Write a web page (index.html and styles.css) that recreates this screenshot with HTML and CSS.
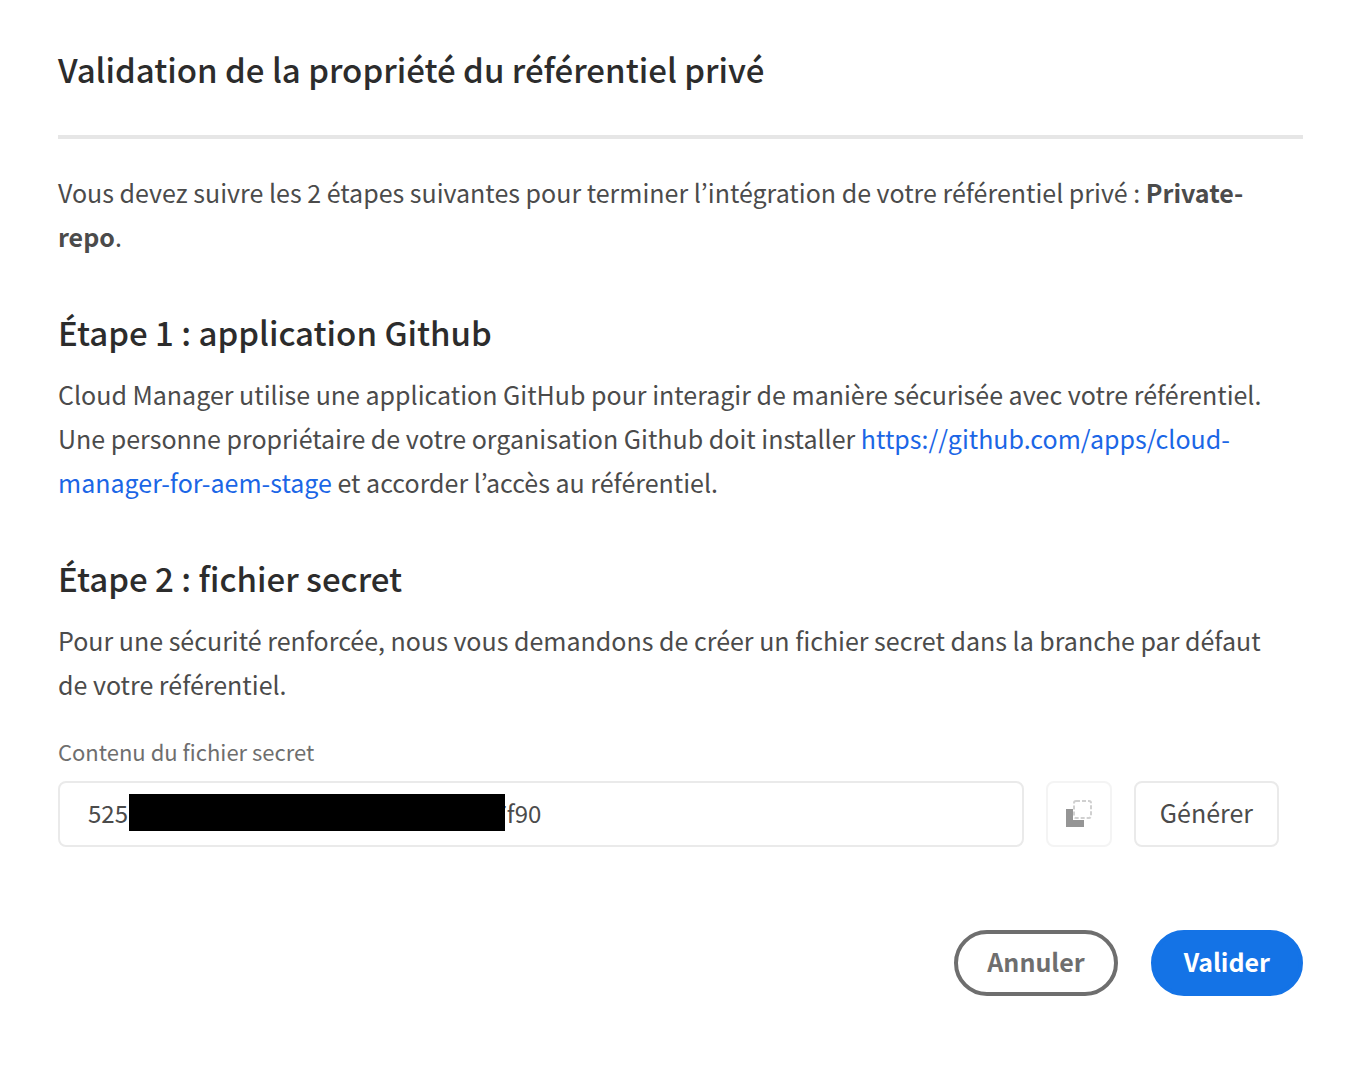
FILE: index.html
```html
<!DOCTYPE html>
<html lang="fr">
<head>
<meta charset="utf-8">
<meta name="viewport" content="width=device-width, initial-scale=1">
<title>Validation de la propriété du référentiel privé</title>
<link rel="stylesheet" href="styles.css">
</head>
<body>
<main class="dialog">
  <h1 class="title">Validation de la propriété du référentiel privé</h1>
  <div class="content">
    <p class="text">Vous devez suivre les 2 étapes suivantes pour terminer l’intégration de votre référentiel privé : <strong>Private-repo</strong>.</p>
    <section class="step">
      <h2 class="heading">Étape 1 : application Github</h2>
      <p class="text">Cloud Manager utilise une application GitHub pour interagir de manière sécurisée avec votre référentiel. Une personne propriétaire de votre organisation Github doit installer <a class="link" href="https://github.com/apps/cloud-manager-for-aem-stage">https://github.com/apps/cloud-manager-for-aem-stage</a> et accorder l’accès au référentiel.</p>
    </section>
    <section class="step">
      <h2 class="heading">Étape 2 : fichier secret</h2>
      <p class="text">Pour une sécurité renforcée, nous vous demandons de créer un fichier secret dans la branche par défaut de votre référentiel.</p>
    </section>
    <label class="label" for="secret">Contenu du fichier secret</label>
    <div class="row">
      <div class="field">
        <input class="input" id="secret" type="text" readonly value="525&nbsp;&nbsp;&nbsp;&nbsp;&nbsp;&nbsp;&nbsp;&nbsp;&nbsp;&nbsp;&nbsp;&nbsp;&nbsp;&nbsp;&nbsp;&nbsp;&nbsp;&nbsp;&nbsp;&nbsp;&nbsp;&nbsp;&nbsp;&nbsp;&nbsp;&nbsp;&nbsp;&nbsp;&nbsp;&nbsp;&nbsp;&nbsp;&nbsp;&nbsp;&nbsp;&nbsp;&nbsp;&nbsp;&nbsp;&nbsp;&nbsp;&nbsp;&nbsp;&nbsp;&nbsp;&nbsp;&nbsp;&nbsp;&nbsp;&nbsp;&nbsp;&nbsp;&nbsp;&nbsp;&nbsp;&nbsp;&nbsp;&nbsp;&nbsp;&nbsp;&nbsp;&nbsp;&nbsp;&nbsp;&nbsp;&nbsp;&nbsp;&nbsp;7f90">
        <span class="mask"></span>
      </div>
      <button class="action copy" type="button" aria-label="Copier" disabled>
        <svg width="28" height="28" viewBox="0 0 28 28" aria-hidden="true">
          <path d="M1 9h7v11h11v7H1z" fill="#959595"/>
          <rect x="9" y="1" width="17" height="17" rx="2" fill="none" stroke="#d0d0d0" stroke-width="2" stroke-dasharray="4 2"/>
        </svg>
      </button>
      <button class="action" type="button">Générer</button>
    </div>
  </div>
  <div class="footer">
    <button class="pill" type="button">Annuler</button>
    <button class="pill primary" type="button">Valider</button>
  </div>
</main>
</body>
</html>
```
FILE: styles.css
```css
* { box-sizing: border-box; }
body {
  margin: 0;
  background: #fff;
  color: #4b4b4b;
  font-family: "Noto Sans CJK KR", "Open Sans", sans-serif;
  font-size: 25px;
  line-height: 44px;
}
.dialog { padding: 47px 51px 80px 58px; }
.title, .heading {
  margin: 0;
  color: #2c2c2c;
  font-size: 33px;
  font-weight: 500;
}
.title {
  padding-bottom: 44px;
  border-bottom: 4px solid #e6e6e6;
}
.content { padding: 31px 24px 0 0; }
.text { margin: 0; }
.step { padding-top: 52px; }
.heading { margin-bottom: 18px; }
.link { color: #1b66e6; text-decoration: none; }
.label {
  display: block;
  margin-top: 27px;
  color: #6e6e6e;
  font-size: 22px;
  line-height: 36px;
}
.row {
  display: flex;
  gap: 22px;
  margin-top: 12px;
}
.field { position: relative; flex: 1; }
.input, .action, .pill {
  height: 66px;
  font: inherit;
  color: #4b4b4b;
  background: #fff;
}
.input {
  display: block;
  width: 100%;
  padding: 0 28px 4px;
  border: 2px solid #eaeaea;
  border-radius: 8px;
  font-size: 24px;
}
.mask {
  position: absolute;
  top: 13px;
  left: 71px;
  width: 376px;
  height: 37px;
  background: #000;
}
.action {
  padding: 0 24px 4px;
  border: 2px solid #eaeaea;
  border-radius: 8px;
}
.copy {
  display: grid;
  place-items: center;
  width: 66px;
  padding: 0;
  border-color: #f4f4f4;
}
.footer {
  display: flex;
  justify-content: flex-end;
  gap: 33px;
  margin-top: 83px;
}
.pill {
  padding: 0 29px 4px;
  border: 4px solid #6e6e6e;
  border-radius: 33px;
  color: #6e6e6e;
  font-weight: 700;
}
.primary {
  border-color: #1473e6;
  background: #1473e6;
  color: #fff;
}
```
